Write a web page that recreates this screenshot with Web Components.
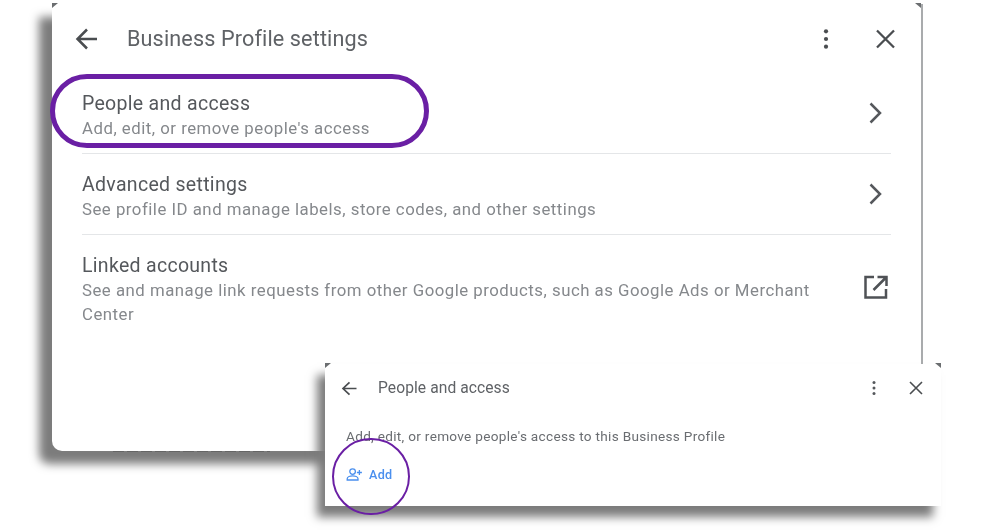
<!DOCTYPE html>
<html>
<head>
<meta charset="utf-8">
<style>
  html, body { margin: 0; height: 100%; background: #fff; }
  body { font-family: Roboto, "Liberation Sans", sans-serif; overflow: hidden; }
</style>
</head>
<body>
<template id="settings-row-tpl">
  <style>
    :host { display: flex; align-items: flex-start; justify-content: space-between; box-sizing: border-box; height: 81px; border-bottom: 1px solid #e4e6e8; }
    :host([last]) { border-bottom: 0; }
    .text { width: 745px; filter: blur(.5px); }
    .title { font-size: 19.5px; line-height: 24px; color: #55585c; letter-spacing: .3px; margin-top: 19px; }
    .sub { font-size: 16.8px; line-height: 24px; color: #85888c; letter-spacing: .5px; }
    .icon { width: 32px; height: 32px; margin-top: var(--icon-top, 23px); margin-right: -1px; filter: blur(.4px); }
  </style>
  <div class="text">
    <div class="title"><slot name="title"></slot></div>
    <div class="sub"><slot name="sub"></slot></div>
  </div>
  <div class="icon"><slot name="icon"></slot></div>
</template>

<template id="dialog-window-tpl">
  <style>
    :host { display: block; position: absolute; box-sizing: border-box; background: #fff; }
    .head { display: flex; align-items: center; }
    .back { display: flex; filter: blur(.4px); }
    .title { flex: 1; color: #5f6266; filter: blur(.5px); }
    .tools { display: flex; align-items: center; filter: blur(.4px); }
    .tick { position: absolute; top: -1px; width: 0; height: 0; border-top: 5px solid #6b6e70; }
    .tick.l { left: 0; border-right: 6px solid transparent; }
    .tick.r { right: 0; border-left: 6px solid transparent; }
  </style>
  <i class="tick l"></i><i class="tick r"></i>
  <div class="head" part="head">
    <div class="back"><slot name="back"></slot></div>
    <div class="title" part="title"><slot name="title"></slot></div>
    <div class="tools"><slot name="tools"></slot></div>
  </div>
  <slot></slot>
</template>

<template id="ring-mark-tpl">
  <style>
    :host { display: block; position: absolute; box-sizing: border-box; border-style: solid; border-color: #6a1fa4; border-radius: 999px; z-index: 5; }
  </style>
</template>

<template id="add-button-tpl">
  <style>
    :host { display: inline-flex; align-items: center; gap: 6px; color: #4a8fee; font-size: 12.6px; font-weight: 500; letter-spacing: .3px; filter: blur(.4px); }
    svg { display: block; width: 17px; height: 17px; }
  </style>
  <svg viewBox="0 0 17 17" fill="none" stroke="#4a8fee" stroke-width="1.300">
    <circle cx="6.600" cy="5.600" r="2.800"/>
    <path d="M1.200 14v-1.200c0-1.800 3-2.900 5.400-2.900s5.400 1.100 5.400 2.900V14z"/>
    <path d="M13.400 4v5M10.900 6.500h5"/>
  </svg>
  <span><slot></slot></span>
</template>

<script>
  function shadowFrom(el, id) {
    el.attachShadow({ mode: 'open' });
    el.shadowRoot.appendChild(document.getElementById(id).content.cloneNode(true));
  }
  class SettingsRow extends HTMLElement {
    constructor() { super(); shadowFrom(this, 'settings-row-tpl'); }
  }
  class DialogWindow extends HTMLElement {
    constructor() { super(); shadowFrom(this, 'dialog-window-tpl'); }
  }
  class RingMark extends HTMLElement {
    constructor() { super(); shadowFrom(this, 'ring-mark-tpl'); }
  }
  class AddButton extends HTMLElement {
    constructor() { super(); shadowFrom(this, 'add-button-tpl'); }
  }
  customElements.define('settings-row', SettingsRow);
  customElements.define('dialog-window', DialogWindow);
  customElements.define('ring-mark', RingMark);
  customElements.define('add-button', AddButton);
</script>

<style>
  #main { left: 52px; top: 4px; width: 871px; height: 447px; border-right: 2px solid #a9abad; border-bottom-left-radius: 10px; box-shadow: -13px 13px 10px 0 #7c7c7c; padding: 0 30px; }
  #main::part(head) { height: 69px; }
  #main::part(title) { font-size: 21.6px; margin-left: 28px; letter-spacing: .13px; }
  #pop { left: 325px; top: 364px; width: 616px; height: 142px; box-shadow: -8px 11px 9px 0 #7c7c7c; padding: 0 17px 0 16px; z-index: 3; }
  #pop::part(head) { height: 48px; }
  #pop::part(title) { font-size: 15.6px; margin-left: 20px; letter-spacing: .08px; }
  .pop-text { font-size: 13.6px; line-height: 20px; color: #6a6d71; margin: 14px 0 0 5px; letter-spacing: .3px; filter: blur(.4px); }
  add-button { margin: 20px 0 0 5px; }
  #ring1 { left: 50px; top: 74px; width: 379px; height: 74px; border-width: 5px; }
  #ring2 { left: 332px; top: 438px; width: 78px; height: 77px; border-width: 2px; }
  .remnant { position: absolute; left: 113px; top: 451px; width: 157px; height: 1px; z-index: 2; opacity: .4; filter: blur(.5px);
    background: repeating-linear-gradient(90deg, #444 0 11px, transparent 11px 14px); }
  .tools-gap { display: flex; align-items: center; }
</style>

<dialog-window id="main">
  <svg slot="back" style="margin-left:-7px" width="24" height="28" viewBox="0 0 24 28" fill="none" stroke="#4a4d50" stroke-width="2.500"><path d="M22 14H3M12 4.500 2.500 14l9.500 9.500"/></svg>
  <span slot="title">Business Profile settings</span>
  <div slot="tools" class="tools-gap">
    <svg width="24" height="28" viewBox="0 0 24 28" fill="#4a4d50"><circle cx="12" cy="6.300" r="2.100"/><circle cx="12" cy="14" r="2.100"/><circle cx="12" cy="21.700" r="2.100"/></svg>
    <svg style="margin-left:33px;margin-right:-8px" width="28" height="28" viewBox="0 0 28 28" fill="none" stroke="#4a4d50" stroke-width="2.300"><path d="M6 5.500l17 17M23 5.500l-17 17"/></svg>
  </div>
  <settings-row>
    <span slot="title">People and access</span>
    <span slot="sub">Add, edit, or remove people's access</span>
    <svg slot="icon" width="32" height="32" viewBox="0 0 32 32" fill="none" stroke="#55585c" stroke-width="2.500"><path d="M10.500 7.500 20 17l-9.500 9.500"/></svg>
  </settings-row>
  <settings-row>
    <span slot="title">Advanced settings</span>
    <span slot="sub">See profile ID and manage labels, store codes, and other settings</span>
    <svg slot="icon" width="32" height="32" viewBox="0 0 32 32" fill="none" stroke="#55585c" stroke-width="2.500"><path d="M10.500 7.500 20 17l-9.500 9.500"/></svg>
  </settings-row>
  <settings-row last style="--icon-top:35px">
    <span slot="title">Linked accounts</span>
    <span slot="sub">See and manage link requests from other Google products, such as Google Ads or Merchant Center</span>
    <svg slot="icon" width="32" height="32" viewBox="0 0 32 32" fill="none" stroke="#4f5256" stroke-width="2.500"><path d="M14 7H5.500v20.500h20.500V19M17.500 7h9v9M26.500 7 13.500 20"/></svg>
  </settings-row>
</dialog-window>

<div class="remnant"></div>

<dialog-window id="pop">
  <svg slot="back" width="17" height="17" viewBox="0 0 17 17" fill="none" stroke="#4a4d50" stroke-width="1.700"><path d="M15.500 8.500H2M8.500 2.300 2 8.500l6.500 6.200"/></svg>
  <span slot="title">People and access</span>
  <div slot="tools" class="tools-gap">
    <svg width="12" height="16" viewBox="0 0 12 16" fill="#55585c"><circle cx="6" cy="2.500" r="1.500"/><circle cx="6" cy="8" r="1.500"/><circle cx="6" cy="13.500" r="1.500"/></svg>
    <svg style="margin-left:28px" width="16" height="16" viewBox="0 0 16 16" fill="none" stroke="#4a4d50" stroke-width="1.600"><path d="M2 2l12 12M14 2 2 14"/></svg>
  </div>
  <div class="pop-text">Add, edit, or remove people's access to this Business Profile</div>
  <add-button>Add</add-button>
</dialog-window>

<ring-mark id="ring1"></ring-mark>
<ring-mark id="ring2"></ring-mark>
</body>
</html>
